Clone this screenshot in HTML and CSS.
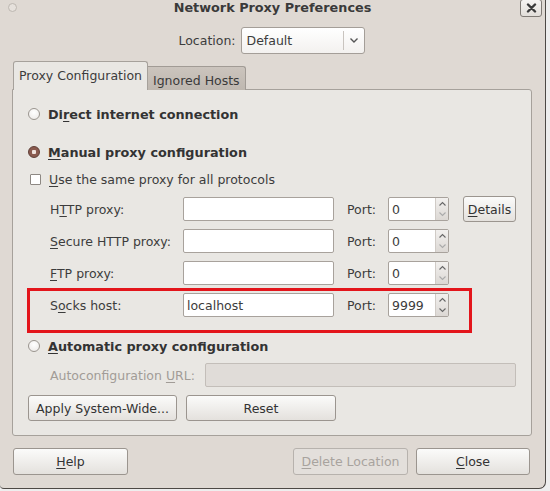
FILE: index.html
```html
<!DOCTYPE html>
<html>
<head>
<meta charset="utf-8">
<link rel="stylesheet" href="styles.css">
</head>
<body>
<div class="window">
  <div class="titlebar">
    <span class="dot"></span>
    <span class="title">Network Proxy Preferences</span>
    <span class="close-btn"><svg width="11" height="10" viewBox="0 0 11 10"><path d="M2 1.5 L9 8.5 M9 1.5 L2 8.5" stroke="#3a3a3a" stroke-width="2.4" stroke-linecap="round"/></svg></span>
  </div>

  <div class="location">
    <span class="loc-label">Location:</span>
    <span class="combo">
      <span class="combo-text">Default</span>
      <span class="combo-arrow"><svg width="10" height="7" viewBox="0 0 10 7"><path d="M1.5 1.5 L5 5 L8.5 1.5" fill="none" stroke="#555" stroke-width="1.4"/></svg></span>
    </span>
  </div>

  <div class="notebook">
    <div class="tabs">
      <span class="tab active">Proxy Configuration</span>
      <span class="tab inactive">Ignored Hosts</span>
    </div>
    <div class="panel">
      <div class="radio-row first"><span class="radio"></span><span class="bold">Di<u>r</u>ect internet connection</span></div>
      <div class="radio-row second"><span class="radio checked"></span><span class="bold"><u>M</u>anual proxy configuration</span></div>
      <div class="check-row"><span class="checkbox"></span><span><u>U</u>se the same proxy for all protocols</span></div>

      <div class="proxy-rows">
        <div class="proxy-row">
          <span class="plabel">H<u>T</u>TP proxy:</span>
          <span class="entry"></span>
          <span class="port">Port:</span>
          <span class="spin"><span class="spin-val">0</span><span class="spin-btns"><svg width="9" height="20" viewBox="0 0 9 20"><path d="M1.5 6.5 L4.5 3.5 L7.5 6.5" fill="none" stroke="#666" stroke-width="1.1"/><path d="M1.5 13.5 L4.5 16.5 L7.5 13.5" fill="none" stroke="#aaa" stroke-width="1.1"/></svg></span></span>
          <span class="btn details"><u>D</u>etails</span>
        </div>
        <div class="proxy-row">
          <span class="plabel"><u>S</u>ecure HTTP proxy:</span>
          <span class="entry"></span>
          <span class="port">Port:</span>
          <span class="spin"><span class="spin-val">0</span><span class="spin-btns"><svg width="9" height="20" viewBox="0 0 9 20"><path d="M1.5 6.5 L4.5 3.5 L7.5 6.5" fill="none" stroke="#666" stroke-width="1.1"/><path d="M1.5 13.5 L4.5 16.5 L7.5 13.5" fill="none" stroke="#aaa" stroke-width="1.1"/></svg></span></span>
        </div>
        <div class="proxy-row">
          <span class="plabel"><u>F</u>TP proxy:</span>
          <span class="entry"></span>
          <span class="port">Port:</span>
          <span class="spin"><span class="spin-val">0</span><span class="spin-btns"><svg width="9" height="20" viewBox="0 0 9 20"><path d="M1.5 6.5 L4.5 3.5 L7.5 6.5" fill="none" stroke="#666" stroke-width="1.1"/><path d="M1.5 13.5 L4.5 16.5 L7.5 13.5" fill="none" stroke="#aaa" stroke-width="1.1"/></svg></span></span>
        </div>
        <div class="proxy-row">
          <span class="plabel">S<u>o</u>cks host:</span>
          <span class="entry"><span class="entry-text">localhost</span></span>
          <span class="port">Port:</span>
          <span class="spin"><span class="spin-val">9999</span><span class="spin-btns"><svg width="9" height="20" viewBox="0 0 9 20"><path d="M1.5 6.5 L4.5 3.5 L7.5 6.5" fill="none" stroke="#666" stroke-width="1.1"/><path d="M1.5 13.5 L4.5 16.5 L7.5 13.5" fill="none" stroke="#666" stroke-width="1.1"/></svg></span></span>
        </div>
      </div>

      <div class="radio-row third"><span class="radio"></span><span class="bold"><u>A</u>utomatic proxy configuration</span></div>
      <div class="auto-row">
        <span class="auto-label">Autoconfiguration <u>U</u>RL:</span>
        <span class="entry disabled"></span>
      </div>
      <div class="panel-buttons">
        <span class="btn apply">Apply System-Wide...</span>
        <span class="btn reset">Reset</span>
      </div>

      <div class="highlight"></div>
    </div>
  </div>

  <div class="footer">
    <span class="btn foot help"><u>H</u>elp</span>
    <span class="spacer"></span>
    <span class="btn foot disabled-btn"><u>D</u>elete Location</span>
    <span class="btn foot close"><u>C</u>lose</span>
  </div>
</div>
</body>
</html>
```

FILE: styles.css
```css
* { box-sizing: border-box; }
html, body { margin: 0; padding: 0; }
body {
  background: #eeeeee;
  font-family: "DejaVu Sans", "Liberation Sans", sans-serif;
  font-size: 12.5px;
  color: #3c3c3c;
  width: 550px;
  height: 491px;
  overflow: hidden;
}
u { text-decoration: underline; text-underline-offset: 2px; }

.window {
  width: 546px;
  height: 489px;
  background: #dfd9d3;
  border-right: 1px solid #4d4945;
  border-bottom: 1px solid #4d4945;
  border-bottom-right-radius: 7px;
  border-bottom-left-radius: 4px;
  display: flex;
  flex-direction: column;
}

/* title bar */
.titlebar {
  height: 17px;
  display: grid;
  grid-template-columns: 1fr auto 1fr;
  align-items: start;
}
.dot {
  width: 9px; height: 9px;
  margin: 3px 0 0 8px;
  border-radius: 50%;
  border: 1px solid #bdb7b1;
  background: #e6e1dc;
}
.title {
  font-weight: bold;
  font-size: 12.8px;
  line-height: 15px;
  color: #3a3a3a;
}
.close-btn {
  justify-self: end;
  margin: -1px 3px 0 0;
  width: 22px; height: 18px;
  border: 1px solid #7f7a75;
  border-radius: 3px;
  background: linear-gradient(#f6f4f2, #e2ded9);
  display: flex; align-items: center; justify-content: center;
}

/* location */
.location {
  margin-top: 10px;
  display: flex;
  justify-content: center;
  align-items: center;
  padding-right: 2px;
}
.loc-label { margin-right: 5px; }
.combo {
  width: 124px; height: 27px;
  background: linear-gradient(#ffffff, #f3f1ef);
  border: 1px solid #a49e98;
  border-radius: 3px;
  display: flex; align-items: center;
}
.combo-text { flex: 1; padding-left: 5px; }
.combo-arrow {
  width: 21px; height: 19px;
  border-left: 1px solid #c9c4bf;
  display: flex; align-items: center; justify-content: center;
}

/* notebook */
.notebook { margin-top: 8px; margin-left: 12px; width: 520px; }
.tabs {
  display: flex;
  align-items: flex-end;
  padding-left: 1px;
  height: 28px;
  position: relative;
  z-index: 1;
  margin-bottom: -1px;
}
.tab { display: flex; align-items: center; }
.tab.active {
  width: 135px; height: 29px;
  padding-left: 5px;
  background: #e9e7e3;
  border: 1px solid #a6a19b;
  border-bottom: none;
  border-radius: 3px 3px 0 0;
  padding-bottom: 2px;
}
.tab.inactive {
  width: 98px; height: 24px;
  padding-left: 5px;
  background: linear-gradient(#cbc4bd, #bfb8b0);
  border: 1px solid #a19b95;
  border-left: none;
  border-bottom: none;
  border-radius: 0 3px 0 0;
  padding-top: 3px;
  color: #3a3a3a;
}
.panel {
  position: relative;
  height: 347px;
  background: #e9e7e3;
  border: 1px solid #a6a19b;
  border-radius: 0 3px 3px 3px;
  padding-top: 14px;
}

.radio-row, .check-row {
  height: 20px;
  display: flex; align-items: center;
  padding-left: 15px;
}
.radio-row.second { margin-top: 18px; }
.radio-row.third { margin-top: 19px; }
.check-row { margin-top: 7px; padding-left: 17px; }
.bold { font-weight: bold; color: #333; font-size: 12.8px; }
.radio {
  width: 12px; height: 12px;
  border-radius: 50%;
  border: 1px solid #9a958f;
  background: radial-gradient(circle at 50% 35%, #ffffff, #ebe8e5);
  margin-right: 8px;
  flex: none;
}
.radio.checked {
  border: 1px solid #5e3d35;
  background: radial-gradient(circle, #efe2dc 0 2px, #8a5a4e 2.5px 100%);
}
.checkbox {
  width: 11px; height: 11px;
  border: 1px solid #8d8883;
  border-radius: 1px;
  background: #ffffff;
  margin-right: 8px;
  flex: none;
}

.proxy-rows {
  margin-top: 8px;
  display: flex; flex-direction: column;
  gap: 8px;
}
.proxy-row {
  height: 24px;
  display: flex; align-items: center;
  padding-left: 37px;
}
.plabel { width: 133px; }
.entry {
  width: 151px; height: 24px;
  background: #ffffff;
  border: 1px solid #a8a29c;
  border-radius: 2px;
  display: flex; align-items: center;
  flex: none;
}
.entry-text { padding-left: 3px; }
.port { margin-left: 13px; width: 41px; }
.spin {
  width: 61px; height: 24px;
  background: #ffffff;
  border: 1px solid #a8a29c;
  border-radius: 2px;
  display: flex;
  flex: none;
}
.spin-val { flex: 1; padding-left: 3px; display: flex; align-items: center; }
.spin-btns {
  width: 13px;
  background: linear-gradient(#f2f0ee, #dcd8d4);
  border-left: 1px solid #d0cbc6;
  display: flex; align-items: center; justify-content: center;
}

.btn {
  display: flex; align-items: center; justify-content: center;
  background: linear-gradient(#fbfbfa, #e4e1dd);
  border: 1px solid #9b958f;
  border-radius: 3px;
  color: #333;
  flex: none;
}
.details { margin-left: 14px; width: 53px; height: 26px; margin-top: -1px; margin-bottom: -1px; }

.auto-row {
  margin-top: 7px;
  height: 24px;
  display: flex; align-items: center;
  padding-left: 37px;
}
.auto-label { width: 155px; color: #a19c97; }
.entry.disabled {
  width: 311px;
  background: #e0dcd8;
  border-color: #c3beb9;
}
.panel-buttons {
  margin-top: 8px;
  display: flex;
  padding-left: 15px;
  gap: 9px;
}
.apply { width: 149px; height: 26px; }
.reset { width: 150px; height: 26px; }

.highlight {
  position: absolute;
  left: 14px; top: 198px;
  width: 445px; height: 45px;
  border: 3px solid #e3151b;
}

/* footer */
.footer {
  margin-top: 12px;
  display: flex;
  padding-left: 13px;
  padding-right: 15px;
}
.foot { height: 27px; width: 115px; }
.spacer { flex: 1; }
.disabled-btn {
  color: #a8a39e;
  background: #e3dfdb;
  border-color: #b7b2ad;
  margin-right: 8px;
}
.close { width: 114px; }
```
